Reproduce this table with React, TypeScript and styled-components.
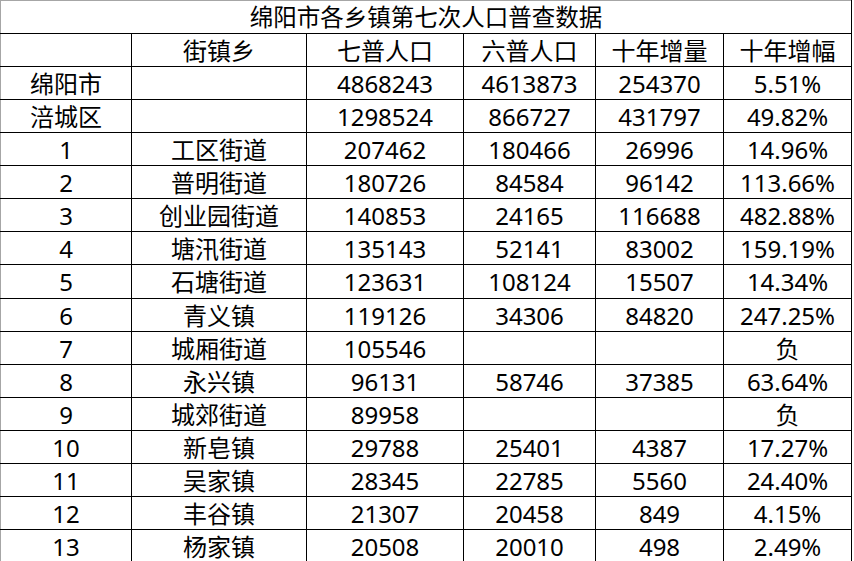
import React from 'react';
import styled, { createGlobalStyle } from 'styled-components';

const GlobalStyle = createGlobalStyle`
  html, body {
    margin: 0;
    padding: 0;
    background: #fff;
  }
  body {
    font-family: "Noto Sans", "Noto Sans CJK SC", sans-serif;
    color: #000;
  }
`;

const Sheet = styled.div`
  width: 854px;
  height: 561px;
  overflow: hidden;
  background: #fff;
`;

const Table = styled.table`
  border-collapse: collapse;
  table-layout: fixed;
  width: 852px;
  border-top: 1px solid #a6a6a6;
  border-left: 1px solid #a6a6a6;
`;

const Row = styled.tr`
  height: 33.07px;
`;

const TitleCell = styled.td`
  height: 32px;
  padding: 0;
  text-align: center;
  vertical-align: middle;
  font-family: "Noto Sans CJK SC", sans-serif;
  font-size: 23.5px;
  line-height: 1;
  border-right: 1px solid #000;
  border-bottom: 1px solid #000;
`;

const Cell = styled.td<{ $first?: boolean }>`
  padding: 2px 0 0;
  text-align: center;
  vertical-align: middle;
  font-size: 24px;
  line-height: 1;
  white-space: nowrap;
  border-bottom: 1px solid #000;
  border-right: 1px solid #000;
  border-left: ${(p) => (p.$first ? '1px solid #a6a6a6' : '1px solid #000')};
`;

const widths = [131, 175, 157, 132, 128, 128];

const header = ['', '街镇乡', '七普人口', '六普人口', '十年增量', '十年增幅'];

const rows: string[][] = [
  ['绵阳市', '', '4868243', '4613873', '254370', '5.51%'],
  ['涪城区', '', '1298524', '866727', '431797', '49.82%'],
  ['1', '工区街道', '207462', '180466', '26996', '14.96%'],
  ['2', '普明街道', '180726', '84584', '96142', '113.66%'],
  ['3', '创业园街道', '140853', '24165', '116688', '482.88%'],
  ['4', '塘汛街道', '135143', '52141', '83002', '159.19%'],
  ['5', '石塘街道', '123631', '108124', '15507', '14.34%'],
  ['6', '青义镇', '119126', '34306', '84820', '247.25%'],
  ['7', '城厢街道', '105546', '', '', '负'],
  ['8', '永兴镇', '96131', '58746', '37385', '63.64%'],
  ['9', '城郊街道', '89958', '', '', '负'],
  ['10', '新皂镇', '29788', '25401', '4387', '17.27%'],
  ['11', '吴家镇', '28345', '22785', '5560', '24.40%'],
  ['12', '丰谷镇', '21307', '20458', '849', '4.15%'],
  ['13', '杨家镇', '20508', '20010', '498', '2.49%'],
];

export default function App() {
  return (
    <Sheet>
      <GlobalStyle />
      <Table>
        <colgroup>
          {widths.map((w, i) => (
            <col key={i} style={{ width: w }} />
          ))}
        </colgroup>
        <tbody>
          <tr>
            <TitleCell colSpan={6}>绵阳市各乡镇第七次人口普查数据</TitleCell>
          </tr>
          <Row>
            {header.map((h, i) => (
              <Cell key={i} $first={i === 0}>
                {h}
              </Cell>
            ))}
          </Row>
          {rows.map((r, ri) => (
            <Row key={ri}>
              {r.map((v, ci) => (
                <Cell key={ci} $first={ci === 0}>
                  {v}
                </Cell>
              ))}
            </Row>
          ))}
        </tbody>
      </Table>
    </Sheet>
  );
}
